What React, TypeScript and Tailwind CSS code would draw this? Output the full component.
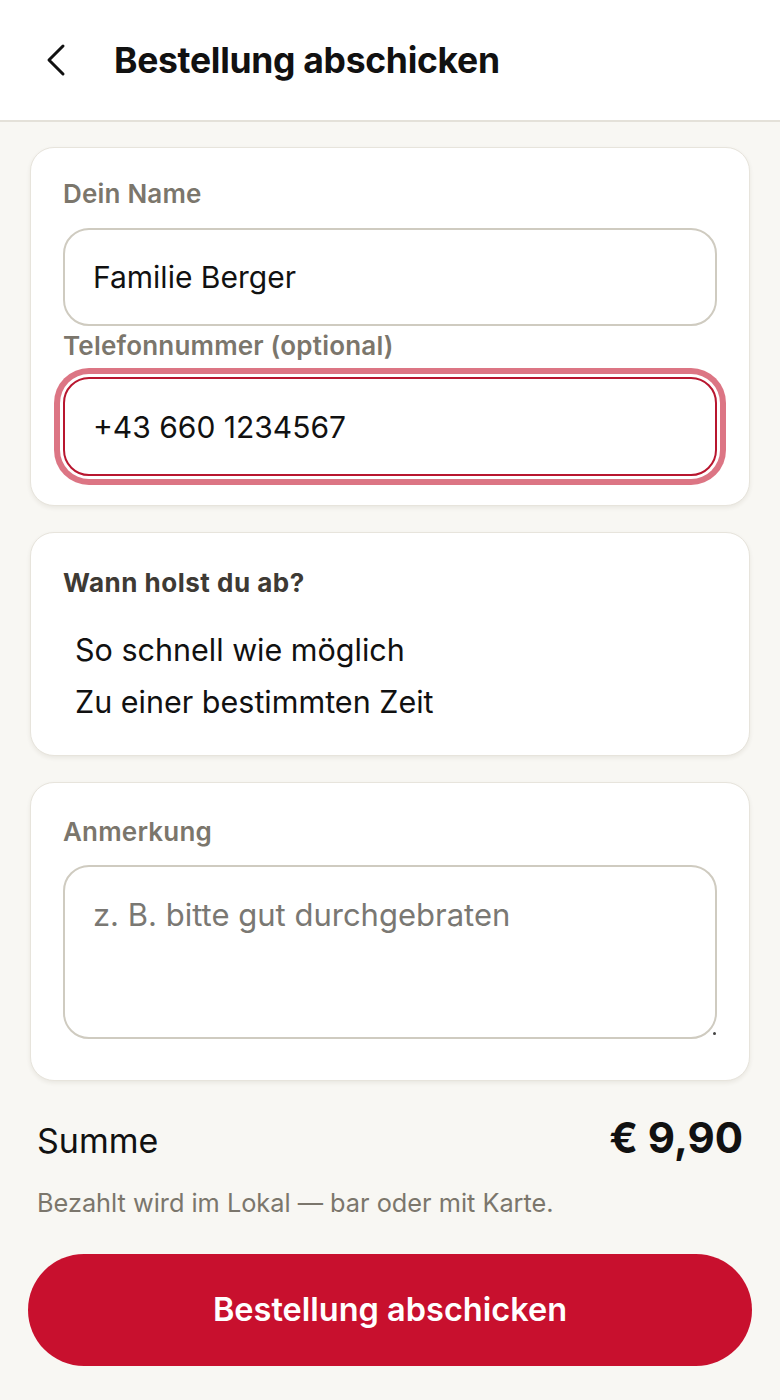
const font = { fontFamily: "Inter, 'Noto Sans', sans-serif" }

function Label({ children, className = "" }: { children: string; className?: string }): JSX.Element {
  return (
    <div className={`text-[26px] leading-[32px] font-semibold tracking-[0.2px] text-[#7b766c] ${className}`}>{children}</div>
  )
}

function Card({ children, className = "" }: { children: React.ReactNode; className?: string }): JSX.Element {
  return (
    <section
      className={`rounded-[24px] border-[1.5px] border-[#e7e4dc] bg-white px-[32px] shadow-[0_2px_4px_rgba(60,50,30,0.08)] ${className}`}
    >
      {children}
    </section>
  )
}

export default function App(): JSX.Element {
  return (
    <div className="min-h-[1400px] bg-[#f8f7f3] text-[#111]" style={font}>
      {/* header */}
      <header className="flex h-[122px] items-center border-b-2 border-[#e4e1d9] bg-white">
        <button className="ml-[38px] flex h-[44px] w-[36px] items-center justify-center text-[#111]">
          <svg width="26" height="34" viewBox="0 0 26 34" fill="none">
            <path d="M20 3 L6 17 L20 31" stroke="currentColor" strokeWidth="3" strokeLinecap="round" strokeLinejoin="round" />
          </svg>
        </button>
        <h1 className="ml-[40px] pt-[2px] text-[35.5px] font-bold tracking-[-0.3px]">Bestellung abschicken</h1>
      </header>

      <main className="flex flex-col gap-[26px] px-[30px] pt-[25px]">
        <Card className="pb-[29px] pt-[30px]">
          <Label>Dein Name</Label>
          <input
            readOnly
            defaultValue="Familie Berger"
            className="mt-[18px] h-[98px] w-full rounded-[26px] border-2 border-[#cfcbc0] bg-white px-[28px] text-[30px] text-[#111] outline-none"
          />
          <Label className="mt-[4px]">Telefonnummer (optional)</Label>
          <input
            readOnly
            defaultValue="+43 660 1234567"
            className="mt-[15px] h-[99px] w-full rounded-[26px] border-2 border-[#b8162f] bg-white px-[28px] text-[30px] text-[#111] outline-none ring-[6px] ring-[#dc7584] ring-offset-[3px] ring-offset-white"
          />
        </Card>

        <Card className="pb-[27px] pt-[34px]">
          <div className="text-[26px] leading-[32px] font-bold tracking-[0.5px] text-[#3e3a34]">Wann holst du ab?</div>
          <div className="mt-[25px] flex flex-col pl-[12px] text-[30.5px] leading-[52px]">
            <div>So schnell wie möglich</div>
            <div>Zu einer bestimmten Zeit</div>
          </div>
        </Card>

        <Card className="pb-[41px] pt-[33px]">
          <Label>Anmerkung</Label>
          <div className="relative mt-[17px]">
            <textarea
              readOnly
              placeholder="z. B. bitte gut durchgebraten"
              className="block h-[174px] w-full resize-none rounded-[26px] border-2 border-[#cfcbc0] bg-white px-[28px] pt-[28px] text-[31px] leading-[40px] text-[#111] outline-none placeholder:text-[#7a7873]"
            />
            <span className="absolute bottom-[4px] right-[1px] h-[3px] w-[3px] rounded-full bg-[#444]" />
          </div>
        </Card>
      </main>

      <div className="flex items-baseline justify-between px-[37px] pt-[25px]">
        <span className="text-[34px]">Summe</span>
        <span className="text-[42px] font-bold">€ 9,90</span>
      </div>
      <p className="mt-[15px] px-[37px] text-[25.3px] text-[#7b766c]">Bezahlt wird im Lokal — bar oder mit Karte.</p>

      <div className="px-[28px] pt-[32px]">
        <button className="flex h-[112px] w-full items-center justify-center rounded-full bg-[#c8102e] text-[32.5px] font-semibold text-white">
          Bestellung abschicken
        </button>
      </div>
    </div>
  )
}
